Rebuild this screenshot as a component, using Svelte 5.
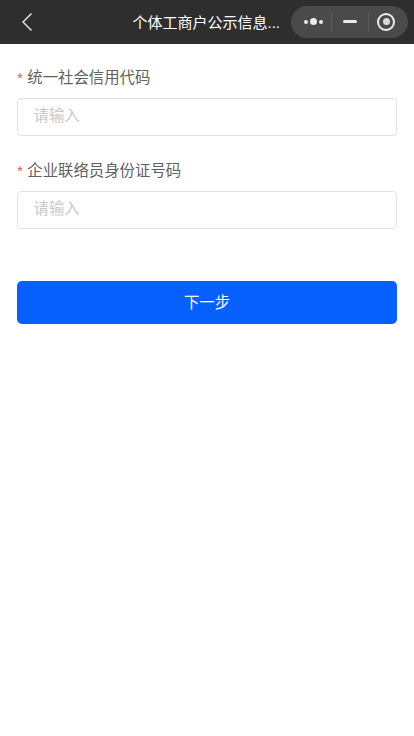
<script>
  let creditCode = '';
  let contactId = '';
</script>

<div class="page">
  <header class="nav">
    <button class="back" aria-label="返回">
      <svg width="12" height="20" viewBox="0 0 12 20">
        <path d="M10.5 1.5 2 10l8.5 8.5" fill="none" stroke="#f4f4f4" stroke-width="1.3" />
      </svg>
    </button>
    <h1 class="title">个体工商户公示信息...</h1>
    <div class="capsule">
      <span class="dots"><i></i><i class="big"></i><i></i></span>
      <span class="sep first"></span>
      <span class="minus"></span>
      <span class="sep last"></span>
      <span class="ring"></span>
    </div>
  </header>

  <form class="form" on:submit|preventDefault>
    <div class="field">
      <label for="code"><span class="star">*</span> 统一社会信用代码</label>
      <input id="code" placeholder="请输入" bind:value={creditCode} />
    </div>
    <div class="field">
      <label for="cid"><span class="star">*</span> 企业联络员身份证号码</label>
      <input id="cid" placeholder="请输入" bind:value={contactId} />
    </div>
    <button class="next" type="submit">下一步</button>
  </form>
</div>

<style>
  :global(body) {
    margin: 0;
    background: #fff;
    font-family: "Liberation Sans", "Noto Sans CJK SC", sans-serif;
  }

  .page {
    min-height: 736px;
    background: #fff;
  }

  .nav {
    height: 44px;
    background: #2e2e2e;
    display: flex;
    align-items: center;
    padding: 0 6px 0 21px;
    box-sizing: border-box;
  }

  .back {
    width: 12px;
    height: 20px;
    padding: 0;
    border: 0;
    background: none;
    display: flex;
  }

  .title {
    flex: 1;
    margin: 0 0 2px 99.5px;
    font-size: 15px;
    font-weight: 400;
    color: #fff;
    white-space: nowrap;
  }

  .capsule {
    width: 117px;
    height: 32px;
    margin-bottom: 1px;
    border-radius: 16px;
    background: #4a4a4a;
    display: flex;
    align-items: center;
    box-sizing: border-box;
    padding: 0 0 0 13px;
  }

  .dots {
    display: flex;
    align-items: center;
    gap: 2px;
  }

  .dots i {
    width: 4px;
    height: 4px;
    border-radius: 50%;
    background: #ececec;
  }

  .dots i.big {
    width: 7px;
    height: 7px;
  }

  .sep {
    width: 1px;
    height: 20px;
    background: #5c5c5c;
  }

  .sep.first {
    margin: 0 11px 0 8px;
  }

  .sep.last {
    margin: 0 8px 0 11px;
  }

  .minus {
    width: 14px;
    height: 3px;
    border-radius: 2px;
    background: #ececec;
  }

  .ring {
    width: 18px;
    height: 18px;
    border: 2px solid #ececec;
    border-radius: 50%;
    box-sizing: border-box;
    display: flex;
    align-items: center;
    justify-content: center;
  }

  .ring::after {
    content: "";
    width: 7px;
    height: 7px;
    border-radius: 50%;
    background: #d8d8d8;
  }

  .form {
    padding: 24px 17px 0;
    display: flex;
    flex-direction: column;
  }

  .field {
    display: flex;
    flex-direction: column;
    gap: 10px;
    margin-bottom: 25.4px;
  }

  label {
    font-size: 15.4px;
    line-height: 20px;
    color: #5f5f5f;
  }

  .star {
    color: #e5603f;
  }

  input {
    height: 37.6px;
    box-sizing: border-box;
    border: 1px solid #e2e2e2;
    border-radius: 4px;
    padding: 0 15.5px 1px;
    font: inherit;
    font-size: 15.4px;
    outline: none;
  }

  input::placeholder {
    color: #c8c8c8;
  }

  .next {
    height: 43px;
    margin-top: 27px;
    padding: 0 0 2px;
    border: 0;
    border-radius: 5px;
    background: #0560fd;
    color: #fff;
    font: inherit;
    font-size: 15.4px;
  }
</style>
